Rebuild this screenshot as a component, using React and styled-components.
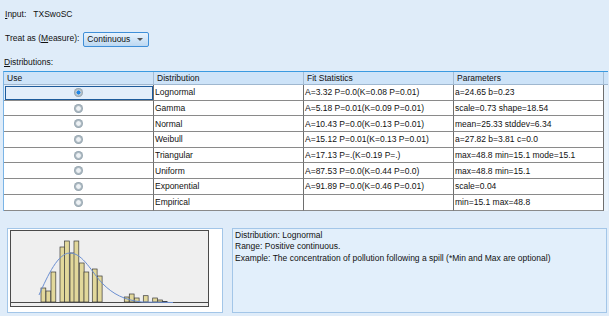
import styled, { createGlobalStyle } from "styled-components";

const GlobalStyle = createGlobalStyle`
  html, body {
    margin: 0;
    padding: 0;
    background: #dfecf9;
  }
  body {
    font-family: "Liberation Sans", Arial, sans-serif;
    font-size: 8.5px;
    color: #111;
  }
`;

const Page = styled.div`
  width: 609px;
  height: 316px;
  overflow: hidden;
  background: #dfecf9;
`;

const FieldRow = styled.div`
  display: flex;
  align-items: center;
  padding-left: ${(p) => p.$indent || 5}px;
  height: ${(p) => p.$height}px;
  margin-top: ${(p) => p.$top || 0}px;
  gap: ${(p) => p.$gap || 0}px;
`;

const Value = styled.span`
  margin-left: 7px;
`;

const DropButton = styled.button`
  display: flex;
  align-items: center;
  justify-content: space-between;
  width: 66px;
  height: 15px;
  padding: 0 5px 0 3px;
  margin-top: 2px;
  font-family: inherit;
  font-size: 8.5px;
  color: #111;
  border: 1px solid #3f8fd8;
  border-radius: 2px;
  background: linear-gradient(#e8f3fd, #bcd8f2);
`;

const Caret = styled.span`
  width: 0;
  height: 0;
  border-left: 3px solid transparent;
  border-right: 3px solid transparent;
  border-top: 3px solid #555;
`;

const TableFrame = styled.div`
  margin: 2px 0 0 3px;
  width: 604px;
  border-top: 1px solid #3a9ae0;
  border-left: 1px solid #7ab4e6;
  background: #e9f3fc;
`;

const Row = styled.div`
  display: grid;
  grid-template-columns: 150px 150px 150px 150px 1fr;
  height: ${(p) => (p.$head ? 13 : 15.7)}px;
`;

const HeadCell = styled.div`
  display: flex;
  align-items: center;
  padding-left: 3px;
  background: #cde3f8;
  border-right: ${(p) => (p.$filler ? "none" : "1px solid #a5bdd4")};
  border-bottom: 1px solid #9fb7cf;
  white-space: nowrap;
`;

const Cell = styled.div`
  display: flex;
  align-items: center;
  justify-content: ${(p) => (p.$center ? "center" : "flex-start")};
  padding-left: ${(p) => (p.$center ? 0 : 1)}px;
  background: ${(p) => (p.$focus ? "#e3eefa" : "#ffffff")};
  border-right: 1px solid #6e6e6e;
  border-bottom: 1px solid #8a8a8a;
  outline: ${(p) => (p.$focus ? "1px solid #1d5b9b" : "none")};
  outline-offset: -2px;
  white-space: nowrap;
  overflow: hidden;
`;

const Filler = styled.div`
  background: #e9f3fc;
`;

const Radio = styled.span`
  width: 9px;
  height: 9px;
  border-radius: 50%;
  margin-right: 1px;
  background: ${(p) =>
    p.$on
      ? "radial-gradient(circle, #1f86e6 0 28%, #c5d0d8 36%, #8e9ea9 70%, #76858f 100%)"
      : "radial-gradient(circle, #eef2f5 0 30%, #b4c0c8 42%, #8e9ea9 72%, #76858f 100%)"};
`;

const Bottom = styled.div`
  display: flex;
  gap: 9px;
  margin: 17px 0 0 7px;
`;

const ChartPanel = styled.div`
  width: 214px;
  height: 83px;
  background: #ffffff;
  border: 1px solid #a3c6e8;
`;

const InfoPanel = styled.div`
  box-sizing: border-box;
  width: 375px;
  height: 85px;
  padding: 1px 2px;
  background: #e2effb;
  border: 1px solid #a3c6e8;
  line-height: 11.7px;
`;

const rows = [
  ["Lognormal", "A=3.32 P=0.0(K=0.08 P=0.01)", "a=24.65 b=0.23"],
  ["Gamma", "A=5.18 P=0.01(K=0.09 P=0.01)", "scale=0.73 shape=18.54"],
  ["Normal", "A=10.43 P=0.0(K=0.13 P=0.01)", "mean=25.33 stddev=6.34"],
  ["Weibull", "A=15.12 P=0.01(K=0.13 P=0.01)", "a=27.82 b=3.81 c=0.0"],
  ["Triangular", "A=17.13 P=.(K=0.19 P=.)", "max=48.8 min=15.1 mode=15.1"],
  ["Uniform", "A=87.53 P=0.0(K=0.44 P=0.0)", "max=48.8 min=15.1"],
  ["Exponential", "A=91.89 P=0.0(K=0.46 P=0.01)", "scale=0.04"],
  ["Empirical", "", "min=15.1 max=48.8"],
];

// histogram bars: [x, top] in chart coords, bottom at 73
const bars = [
  [33, 59], [38, 62], [43, 43],
  [52, 18], [56.5, 12], [62, 24], [66, 12], [71.3, 34], [76, 43],
  [84.3, 40], [89.3, 47],
  [116.3, 68], [121.3, 65], [126.3, 69], [135.3, 66.7],
  [144.7, 69], [149.7, 71], [154.3, 72.5],
];

const Histogram = () => (
  <svg width="214" height="83" viewBox="0 0 214 83">
    <rect x="2.5" y="1.5" width="198" height="76" fill="#efefef" stroke="#4a4a4a" />
    {bars.map(([x, top], i) => (
      <rect
        key={i}
        x={x}
        y={top}
        width="4.8"
        height={73 - top}
        fill="#e2d89b"
        stroke="#3a3a3a"
        strokeWidth="0.7"
      />
    ))}
    <line x1="2.5" y1="73.5" x2="200.5" y2="73.5" stroke="#4a4a4a" />
    <path
      d="M31,66 C40,46 50,24 62,24 C75,24 84,44 95,55 C105,65 116,71 134,73 L165,73.5"
      fill="none"
      stroke="#6b8fd2"
      strokeWidth="1"
    />
  </svg>
);

export default function App() {
  return (
    <Page>
      <GlobalStyle />
      <FieldRow $height={28}>
        <span>
          <u>I</u>nput:
        </span>
        <Value>TXSwoSC</Value>
      </FieldRow>
      <FieldRow $height={20} $gap={4}>
        <span>
          Treat as (<u>M</u>easure):
        </span>
        <DropButton>
          Continuous
          <Caret />
        </DropButton>
      </FieldRow>
      <FieldRow $height={14} $top={7} $indent={4}>
        <span>
          <u>D</u>istributions:
        </span>
      </FieldRow>
      <TableFrame>
        <Row $head>
          <HeadCell>Use</HeadCell>
          <HeadCell>Distribution</HeadCell>
          <HeadCell>Fit Statistics</HeadCell>
          <HeadCell>Parameters</HeadCell>
          <HeadCell $filler />
        </Row>
        {rows.map(([name, fit, params], i) => (
          <Row key={name}>
            <Cell $center $focus={i === 0}>
              <Radio $on={i === 0} />
            </Cell>
            <Cell>{name}</Cell>
            <Cell>{fit}</Cell>
            <Cell>{params}</Cell>
            <Filler />
          </Row>
        ))}
      </TableFrame>
      <Bottom>
        <ChartPanel>
          <Histogram />
        </ChartPanel>
        <InfoPanel>
          Distribution: Lognormal
          <br />
          Range: Positive continuous.
          <br />
          Example: The concentration of pollution following a spill (*Min and Max are optional)
        </InfoPanel>
      </Bottom>
    </Page>
  );
}
